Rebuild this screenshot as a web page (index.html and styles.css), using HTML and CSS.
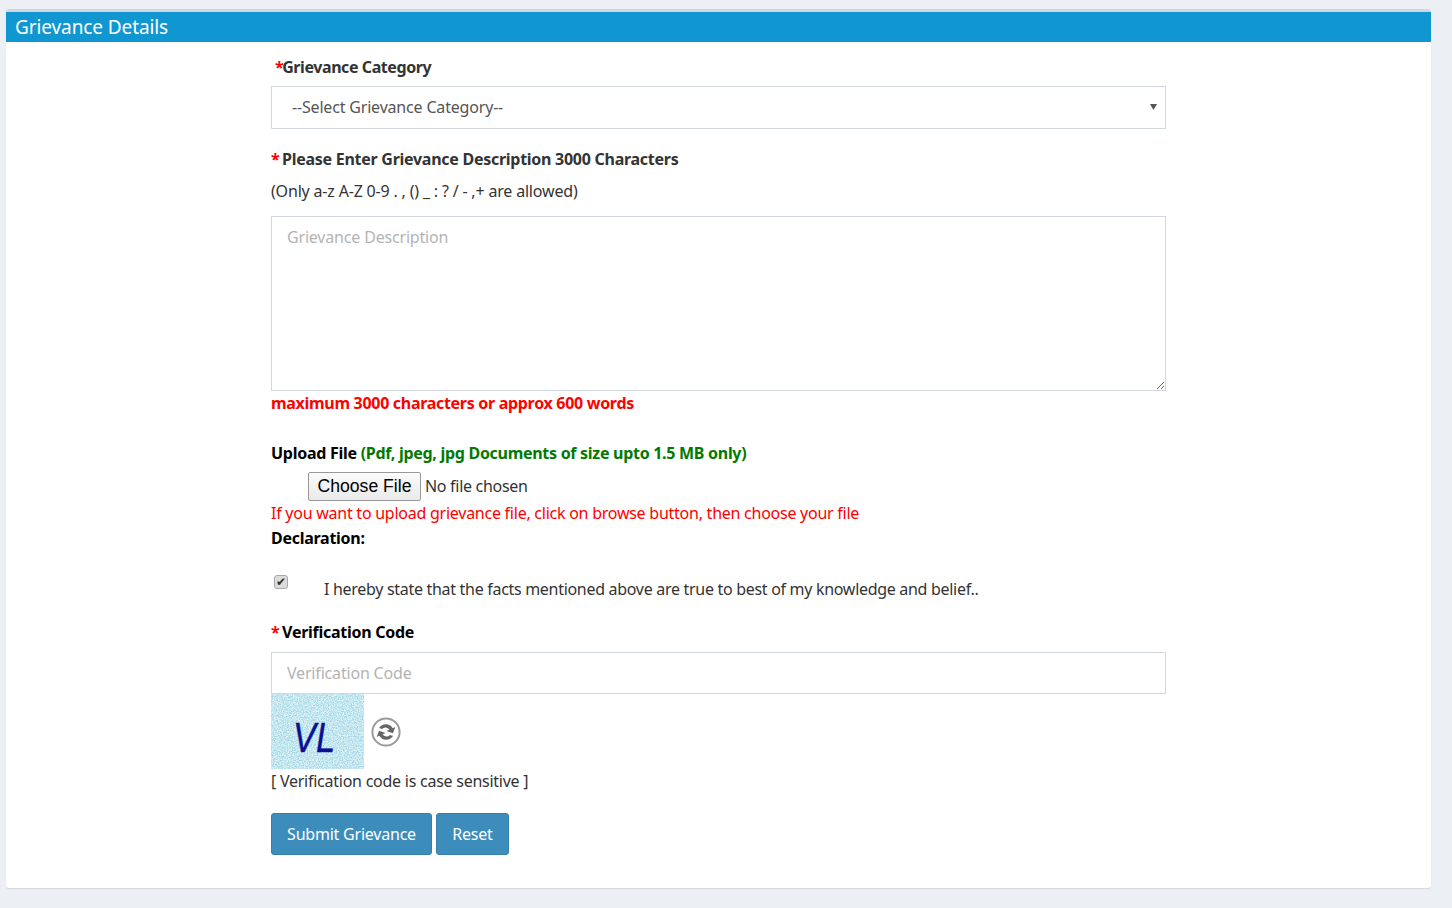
FILE: index.html
```html
<!DOCTYPE html>
<html lang="en">
<head>
<meta charset="utf-8">
<title>Grievance Details</title>
<link rel="stylesheet" href="styles.css">
</head>
<body>
<main class="card">
  <h1 class="card-title">Grievance Details</h1>
  <form class="form">
    <label class="label label-cat"><span class="req">*</span>Grievance Category</label>
    <div class="select-wrap">
      <select class="control select"><option>--Select Grievance Category--</option></select>
      <svg class="caret" width="7" height="6" viewBox="0 0 7 6"><path d="M0 0h7L3.5 6z" fill="#555"/></svg>
    </div>
    <label class="label label-desc"><span class="req">*</span> Please Enter Grievance Description 3000 Characters</label>
    <p class="hint">(Only a-z A-Z 0-9 . , () _ : ? / - ,+ are allowed)</p>
    <textarea class="control textarea" placeholder="Grievance Description"></textarea>
    <p class="limit">maximum 3000 characters or approx 600 words</p>
    <p class="upload-label">Upload File <span class="green">(Pdf, jpeg, jpg Documents of size upto 1.5 MB only)</span></p>
    <input class="file" type="file">
    <p class="upload-note">If you want to upload grievance file, click on browse button, then choose your file</p>
    <p class="declaration">Declaration:</p>
    <div class="check-row">
      <input class="check" type="checkbox" checked>
      <span class="check-text">I hereby state that the facts mentioned above are true to best of my knowledge and belief..</span>
    </div>
    <label class="label label-code"><span class="req">*</span> Verification Code</label>
    <input class="control code" type="text" placeholder="Verification Code">
    <div class="captcha-row">
      <svg class="captcha" width="93" height="75" viewBox="0 0 93 75">
        <defs>
          <filter id="noise" x="0" y="0" width="100%" height="100%">
            <feTurbulence type="fractalNoise" baseFrequency="0.8" numOctaves="2" seed="4"/>
            <feColorMatrix values="0 0 0 0 0.78  0 0 0 0 0.93  0 0 0 0 0.96  1.6 1.6 0 0 -1.1"/>
          </filter>
        </defs>
        <rect width="93" height="75" fill="#a2d5e4"/>
        <rect width="93" height="75" filter="url(#noise)"/>
        <text class="captcha-text" x="22" y="58" textLength="42" lengthAdjust="spacingAndGlyphs">VL</text>
      </svg>
      <svg class="refresh" width="30" height="30" viewBox="0 0 30 30">
        <circle cx="15" cy="15" r="13.6" fill="#fff" stroke="#9a9a9a" stroke-width="2"/>
        <g transform="rotate(20 15 15)">
          <path d="M7 13.6a8.1 8.1 0 0 1 13-4.5l2-2v6.8h-6.8l2.2-2.2a4.6 4.6 0 0 0-7.1 1.9z" fill="#666"/>
          <path d="M23 16.4a8.1 8.1 0 0 1-13 4.5l-2 2v-6.8h6.8l-2.2 2.2a4.6 4.6 0 0 0 7.1-1.9z" fill="#666"/>
        </g>
      </svg>
    </div>
    <p class="case-note">[ Verification code is case sensitive ]</p>
    <div class="actions">
      <button class="btn btn-submit" type="button">Submit Grievance</button>
      <button class="btn btn-reset" type="button">Reset</button>
    </div>
  </form>
</main>
</body>
</html>
```
FILE: styles.css
```css
* { box-sizing: border-box; }
html, body { margin: 0; padding: 0; }
body {
  background: #ecf0f5;
  color: #333;
  font-family: "Noto Sans", "Open Sans", sans-serif;
  font-size: 16px;
  letter-spacing: -0.18px;
  padding: 9px 21px 20px 6px;
}
p { margin: 0; }
.card {
  background: #fff;
  border-top: 3px solid #d2d6de;
  border-radius: 3px;
  box-shadow: 0 1px 1px rgba(0,0,0,.1);
  height: 879px;
}
.card-title {
  margin: 0;
  height: 30px;
  padding-left: 9px;
  background: #1097d2;
  color: #fff;
  font-size: 19px;
  font-weight: 400;
  line-height: 30px;
  letter-spacing: -0.1px;
}
.form { width: 895px; margin-left: 265px; display: flex; flex-direction: column; align-items: flex-start; }
.label { display: block; font-weight: 700; line-height: 22px; letter-spacing: -0.27px; }
.req { color: #f00; letter-spacing: -1.5px; }
.label-cat { margin-top: 14px; padding-left: 4px; letter-spacing: -0.42px; }
.control {
  display: block;
  width: 895px;
  background: #fff;
  border: 1px solid #d2d6de;
  border-radius: 0;
  font-family: inherit;
  font-size: 16px;
  letter-spacing: inherit;
  color: #555;
  outline: none;
}
.control::placeholder { color: #b4b4b4; opacity: 1; }
.select-wrap { position: relative; margin-top: 8px; }
.select { height: 43px; padding: 0 20px 2px; appearance: none; }
.caret { position: absolute; right: 9px; top: 18px; }
.label-desc { margin-top: 19px; }
.hint { margin-top: 10px; line-height: 22px; }
.textarea { margin-top: 14px; height: 175px; padding: 9px 15px; resize: vertical; }
.limit { margin-top: 1px; color: #f00; font-weight: 700; line-height: 22px; letter-spacing: -0.3px; }
.upload-label { margin-top: 28px; line-height: 22px; color: #000; font-weight: 700; letter-spacing: -0.27px; }
.green { color: #007a00; letter-spacing: -0.29px; }
.file {
  margin: 8px 0 0 37px;
  height: 30px;
  font-family: inherit;
  font-size: 16px;
  color: #333;
  letter-spacing: -0.3px;
}
.file::file-selector-button {
  font-family: "Liberation Sans", sans-serif;
  font-size: 17.6px;
  letter-spacing: 0;
  height: 29px;
  width: 113px;
  margin-right: 4px;
  padding: 0;
  color: #000;
  background: linear-gradient(#fbfbfb, #eaeaea);
  border: 1px solid #999;
  border-radius: 2px;
}
.upload-note { color: #f00; line-height: 22px; letter-spacing: -0.25px; }
.declaration { margin-top: 3px; color: #000; font-weight: 700; line-height: 22px; letter-spacing: -0.27px; }
.check-row { display: flex; align-items: flex-start; margin-top: 18px; height: 54px; }
.check {
  appearance: none;
  position: relative;
  margin: 8px 0 0 3px;
  width: 14px;
  height: 14px;
  background: #dcdcdc;
  border: 1px solid #a8a8a8;
  border-radius: 3px;
}
.check::before {
  content: "✔";
  position: absolute;
  inset: 0;
  font: 12px/12px "DejaVu Sans", sans-serif;
  letter-spacing: 0;
  text-align: center;
  color: #333;
}
.check-text { margin: 11px 0 0 36px; line-height: 22px; letter-spacing: -0.3px; }
.label-code { color: #000; }
.code { margin-top: 9px; height: 42px; padding: 0 15px; }
.captcha-row { display: flex; align-items: center; gap: 7px; }
.captcha { display: block; }
.captcha-text {
  font-family: "Liberation Sans", sans-serif;
  font-size: 42px;
  font-style: italic;
  fill: #0b0f94;
  stroke: #0b0f94;
  stroke-width: 0.4px;
  letter-spacing: 0;
}
.refresh { display: block; }
.case-note { margin-top: 1px; line-height: 22px; letter-spacing: -0.25px; }
.actions { display: flex; gap: 4px; margin-top: 21px; }
.btn {
  height: 42px;
  background: #3c8dbc;
  border: 1px solid #367fa9;
  border-radius: 3px;
  color: #fff;
  font-family: inherit;
  font-size: 16px;
  letter-spacing: -0.22px;
  padding: 0;
}
.btn-submit { width: 161px; }
.btn-reset { width: 73px; }
```
